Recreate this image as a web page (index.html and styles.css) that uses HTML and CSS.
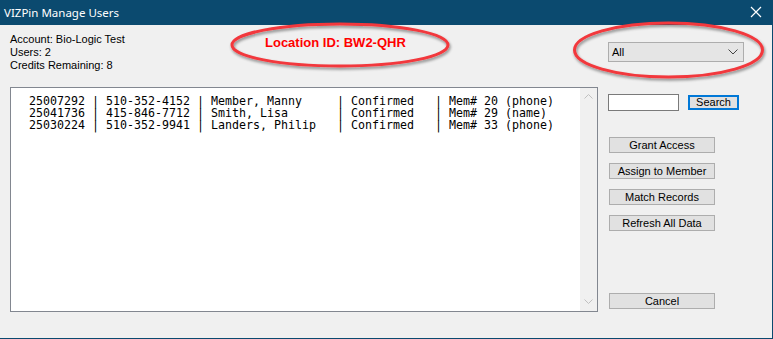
FILE: index.html
```html
<!DOCTYPE html>
<html>
<head>
<meta charset="utf-8">
<link rel="stylesheet" href="styles.css">
</head>
<body>
<div class="window">
  <div class="titlebar">
    <span class="title">VIZPin Manage Users</span>
    <svg class="close" width="12" height="12" viewBox="0 0 12 12"><path d="M1 1L11 11M11 1L1 11" stroke="#fff" stroke-width="1.2" fill="none"/></svg>
  </div>
  <div class="content">
    <div class="header">
      <div class="account">
        <div>Account: Bio-Logic Test</div>
        <div>Users: 2</div>
        <div>Credits Remaining: 8</div>
      </div>
      <div class="location">Location ID: BW2-QHR</div>
      <div class="select">
        <span>All</span>
        <svg width="10" height="6" viewBox="0 0 10 6"><path d="M0.5 0.5L5 5L9.5 0.5" stroke="#444" stroke-width="1" fill="none"/></svg>
      </div>
    </div>
    <div class="main">
      <div class="listbox">
        <pre class="rows">25007292 | 510-352-4152 | Member, Manny     | Confirmed   | Mem# 20 (phone)
25041736 | 415-846-7712 | Smith, Lisa       | Confirmed   | Mem# 29 (name)
25030224 | 510-352-9941 | Landers, Philip   | Confirmed   | Mem# 33 (phone)</pre>
        <div class="scrollbar">
          <svg width="9" height="5" viewBox="0 0 9 5"><path d="M0.5 4.5L4.5 0.5L8.5 4.5" stroke="#c0c0c0" fill="none"/></svg>
          <svg width="9" height="5" viewBox="0 0 9 5"><path d="M0.5 0.5L4.5 4.5L8.5 0.5" stroke="#c0c0c0" fill="none"/></svg>
        </div>
      </div>
      <div class="side">
        <div class="search-row">
          <div class="textbox"></div>
          <div class="btn btn-default">Search</div>
        </div>
        <div class="actions">
          <div class="btn wide">Grant Access</div>
          <div class="btn wide">Assign to Member</div>
          <div class="btn wide">Match Records</div>
          <div class="btn wide">Refresh All Data</div>
        </div>
        <div class="btn wide cancel">Cancel</div>
      </div>
    </div>
  </div>
  <svg class="annot" width="773" height="339" viewBox="0 0 773 339">
    <defs>
      <filter id="sh" x="-10%" y="-20%" width="120%" height="150%">
        <feGaussianBlur in="SourceAlpha" stdDeviation="1.5"/>
        <feOffset dx="1" dy="2" result="b"/>
        <feComponentTransfer><feFuncA type="linear" slope="0.45"/></feComponentTransfer>
        <feMerge><feMergeNode/><feMergeNode in="SourceGraphic"/></feMerge>
      </filter>
    </defs>
    <ellipse cx="340" cy="45" rx="108" ry="21" fill="none" stroke="#f2383c" stroke-width="3" filter="url(#sh)"/>
    <ellipse cx="668.5" cy="50" rx="94" ry="27" fill="none" stroke="#f2383c" stroke-width="3" filter="url(#sh)"/>
  </svg>
</div>
</body>
</html>
```
FILE: styles.css
```css
* { box-sizing: border-box; }
html, body { margin: 0; padding: 0; }
body { background: #f0f0f0; font-family: "Liberation Sans", Arial, sans-serif; }
.window {
  position: relative;
  width: 773px;
  height: 339px;
  background: #f0f0f0;
  border-right: 1px solid #0b4a6f;
  border-bottom: 1px solid #0b4a6f;
  display: flex;
  flex-direction: column;
}
.titlebar {
  height: 25px;
  background: #0b4a6f;
  color: #fff;
  display: flex;
  align-items: center;
  justify-content: space-between;
  padding: 0 10px 1px 4px;
}
.title { font-family: "Noto Sans", sans-serif; font-size: 11.5px; }
.close { display: block; }
.content { flex: 1; display: flex; flex-direction: column; }
.header { height: 62px; display: flex; align-items: flex-start; padding-left: 10px; }
.account { width: 255px; padding-top: 8px; font-size: 11px; line-height: 13px; color: #000; }
.location { padding-top: 10px; color: #ff0000; font-weight: bold; font-size: 13px; font-family: "Liberation Sans", sans-serif; }
.select {
  margin-left: auto;
  margin-right: 28px;
  margin-top: 17px;
  width: 136px;
  height: 20px;
  background: #e5e5e5;
  border: 1px solid #adadad;
  display: flex;
  align-items: center;
  justify-content: space-between;
  padding: 0 5px 0 3px;
  font-size: 11px;
}
.main { display: flex; padding-left: 10px; height: 225px; }
.listbox {
  width: 588px;
  height: 225px;
  background: #fff;
  border: 1px solid #828790;
  display: flex;
  justify-content: space-between;
}
.rows {
  margin: 0;
  padding: 7px 0 0 18px;
  font-family: "DejaVu Sans Mono", "Liberation Mono", monospace;
  font-size: 11.63px;
  line-height: 12px;
  color: #000;
}
.scrollbar {
  width: 17px;
  background: #f0f0f0;
  display: flex;
  flex-direction: column;
  justify-content: space-between;
  align-items: center;
  padding: 6px 0 7px;
}
.scrollbar svg { display: block; }
.side { margin-left: 10px; display: flex; flex-direction: column; padding-top: 7px; }
.search-row { display: flex; gap: 9px; align-items: flex-start; }
.textbox { width: 71px; height: 17px; background: #fff; border: 1px solid #7a7a7a; }
.btn {
  height: 16px;
  background: #e1e1e1;
  border: 1px solid #adadad;
  font-size: 11px;
  line-height: 14px;
  text-align: center;
  color: #000;
}
.btn-default {
  width: 51px;
  height: 15px;
  margin-top: 1px;
  border-color: #0078d7;
  box-shadow: inset 0 0 0 1px #0078d7;
  line-height: 13px;
}
.actions { display: flex; flex-direction: column; gap: 10px; margin-top: 26px; margin-left: 1px; }
.wide { width: 106px; }
.cancel { margin-top: 62px; margin-left: 1px; }
.annot { position: absolute; left: 0; top: 0; pointer-events: none; }
```
